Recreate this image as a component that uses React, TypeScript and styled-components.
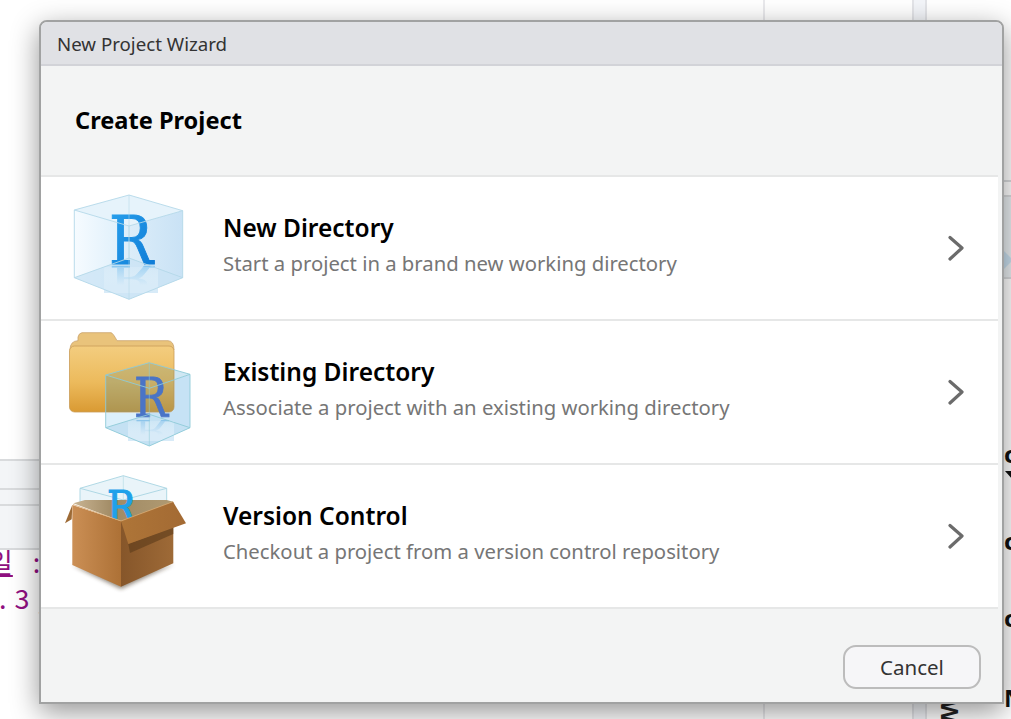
import styled, { createGlobalStyle } from 'styled-components';

const GlobalStyle = createGlobalStyle`
  html, body {
    margin: 0;
    padding: 0;
    background: #ffffff;
    font-family: 'Noto Sans', 'Open Sans', sans-serif;
  }
`;

//background ide
const Page = styled.div`
  position: relative;
  width: 1011px;
  height: 719px;
  overflow: hidden;
  display: flex;
  background: #ffffff;
`;

const SourcePane = styled.div`
  width: 765px;
  height: 100%;
  flex-shrink: 0;
  padding-top: 459px;
  box-sizing: border-box;
  border-right: 2px solid #e9e9ec;
  overflow: hidden;
`;

const PaneBand = styled.div<{ $height: number }>`
  height: ${({ $height }) => $height}px;
  background: #f3f5f7;
  border-top: 2px solid #d9dbdd;
`;

const Outline = styled.div`
  font-family: 'Noto Sans CJK KR', 'Noto Sans', sans-serif;
  font-size: 27px;
  line-height: 24px;
  color: #8f0f80;
  margin-left: -12px;
  white-space: nowrap;
  border-top: 2px solid #d9dbdd;
`;

const OutlineWord = styled.span`
  text-decoration: underline;
  margin-right: 20px;
`;

const OutlineNumbers = styled.span`
  display: block;
  margin: 12px 0 0 11px;
  letter-spacing: 1px;
`;

const MiddlePane = styled.div`
  width: 147px;
  flex-shrink: 0;
`;

const Splitter = styled.div`
  width: 11px;
  height: 100%;
  flex-shrink: 0;
  background: #f3f5f9;
  border-left: 2px solid #e3e4e8;
  border-right: 2px solid #e3e4e8;
`;

const ConsolePane = styled.div`
  flex: 1;
  padding-top: 180px;
  min-width: 0;
`;

const ConsoleTab = styled.div`
  height: 13px;
  border-top: 2px solid #d9dbdd;
`;

const ConsoleBar = styled.div`
  height: 80px;
  display: flex;
  align-items: center;
  padding-left: 76px;
  background: #e9eef1;
  border-top: 2px solid #d9dbdd;
  border-bottom: 2px solid #d9dbdd;
`;

const ConsoleArrow = styled.div`
  width: 0;
  height: 0;
  border-top: 10px solid transparent;
  border-bottom: 10px solid transparent;
  border-left: 10px solid #c9dfee;
  margin-top: 46px;
`;

const ConsoleLines = styled.div`
  padding: 162px 0 0 77px;
  font-family: 'Noto Sans', sans-serif;
  font-size: 24px;
  font-weight: 700;
  line-height: 26px;
  color: #111111;
`;

const ConsoleLine = styled.div<{ $gap: number }>`
  height: ${({ $gap }) => $gap}px;
`;

const PromptMark = styled.div`
  width: 0;
  height: 0;
  margin: 4px 0 0 1px;
  border-left: 7px solid transparent;
  border-right: 7px solid transparent;
  border-top: 8px solid #111111;
`;

const SideWord = styled.div`
  position: absolute;
  left: 940px;
  top: 700px;
  font-family: 'Noto Sans', sans-serif;
  font-size: 24px;
  font-weight: 700;
  line-height: 24px;
  color: #222222;
  transform-origin: 0 0;
  transform: rotate(90deg) translate(0, -22px);
`;

//dialog
const Dialog = styled.div`
  position: absolute;
  left: 39px;
  top: 20px;
  width: 965px;
  height: 684px;
  box-sizing: border-box;
  display: flex;
  flex-direction: column;
  border: 2px solid #a1a2a2;
  border-radius: 8px 8px 0 0;
  background: #f3f4f4;
  box-shadow: 0 8px 28px rgba(0, 0, 0, 0.42);
  overflow: hidden;
`;

const TitleBar = styled.div`
  height: 44px;
  flex-shrink: 0;
  box-sizing: border-box;
  display: flex;
  align-items: center;
  padding-left: 16px;
  background: #e0e1e5;
  border-bottom: 2px solid #d2d3d8;
  font-size: 18.7px;
  color: #333333;
`;

const Header = styled.div`
  height: 109px;
  flex-shrink: 0;
  box-sizing: border-box;
  display: flex;
  align-items: center;
  padding: 0 0 1px 34px;
  font-size: 23.6px;
  font-weight: 700;
  color: #000000;
`;

const OptionList = styled.div`
  margin-right: 4px;
  border-top: 2px solid #e6e7e7;
`;

const OptionRow = styled.div`
  height: 142px;
  display: flex;
  align-items: center;
  padding-left: 29px;
  background: #ffffff;
  border-bottom: 2px solid #e6e7e7;
`;

const OptionIcon = styled.svg`
  width: 130px;
  height: 130px;
  flex-shrink: 0;
  overflow: visible;
  margin: 2px 23px 0 0;
`;

const OptionText = styled.div`
  display: flex;
  flex-direction: column;
  gap: 6px;
  margin-top: -8px;
`;

const OptionTitle = styled.div`
  font-size: 24.5px;
  line-height: 31px;
  font-weight: 600;
  color: #000000;
`;

const OptionDesc = styled.div`
  font-size: 20.3px;
  line-height: 28px;
  color: #767676;
`;

const Chevron = styled.svg`
  width: 18px;
  height: 26px;
  margin-left: auto;
  margin-right: 33px;
  fill: none;
  stroke: #6b6b6b;
  stroke-width: 3.2;
  stroke-linecap: round;
  stroke-linejoin: round;
`;

const Footer = styled.div`
  flex: 1;
  display: flex;
  justify-content: flex-end;
  align-items: flex-start;
  padding: 36px 21px 0 0;
`;

const CancelButton = styled.button`
  width: 138px;
  height: 44px;
  box-sizing: border-box;
  border: 2px solid #bcbcbc;
  border-radius: 13px;
  background: #f6f6f8;
  font-family: inherit;
  font-size: 20.5px;
  color: #333333;
  padding: 0;
`;

const rFont = "'DejaVu Serif', 'Liberation Serif', serif";

function IconDefs() {
  return (
    <defs>
      <linearGradient id="leftFace" x1="0" y1="0" x2="1" y2="0">
        <stop offset="0" stopColor="#f6fbff" />
        <stop offset="1" stopColor="#dbeefa" />
      </linearGradient>
      <linearGradient id="rightFace" x1="0" y1="0" x2="1" y2="0">
        <stop offset="0" stopColor="#dcedf9" />
        <stop offset="1" stopColor="#c9e2f5" />
      </linearGradient>
      <linearGradient id="rLetter" x1="0" y1="0" x2="1" y2="1">
        <stop offset="0" stopColor="#2aa3ee" />
        <stop offset="1" stopColor="#0c78d4" />
      </linearGradient>
      <linearGradient id="reflectFade" x1="0" y1="0" x2="0" y2="1">
        <stop offset="0" stopColor="#e4f2fb" stopOpacity="0.3" />
        <stop offset="0.7" stopColor="#d8ebf8" stopOpacity="1" />
      </linearGradient>
      <linearGradient id="folderBody" x1="0" y1="0" x2="0" y2="1">
        <stop offset="0" stopColor="#f3cd7f" />
        <stop offset="0.55" stopColor="#ecba5c" />
        <stop offset="1" stopColor="#d99a33" />
      </linearGradient>
      <linearGradient id="boxLeft" x1="0" y1="0" x2="1" y2="0">
        <stop offset="0" stopColor="#cb8f55" />
        <stop offset="1" stopColor="#ad7136" />
      </linearGradient>
      <linearGradient id="boxRight" x1="0" y1="0" x2="1" y2="0">
        <stop offset="0" stopColor="#86562a" />
        <stop offset="1" stopColor="#9e6a37" />
      </linearGradient>
      <linearGradient id="boxFlap" x1="0" y1="0" x2="1" y2="0">
        <stop offset="0" stopColor="#ae7538" />
        <stop offset="1" stopColor="#a36a33" />
      </linearGradient>
      <linearGradient id="boxInside" x1="0" y1="0" x2="1" y2="0">
        <stop offset="0" stopColor="#c9b493" />
        <stop offset="0.4" stopColor="#a08a64" />
        <stop offset="1" stopColor="#b09a72" />
      </linearGradient>
      <clipPath id="folderClip">
        <rect x="-0.5" y="18" width="104.5" height="66" rx="5" />
      </clipPath>
      <clipPath id="boxOpening">
        <polygon points="3.3,20 103.3,20 103.3,37.7 51,57 3.3,39.3" />
      </clipPath>
      <filter id="soft" x="-20%" y="-20%" width="140%" height="140%">
        <feGaussianBlur stdDeviation="2" />
      </filter>
    </defs>
  );
}

function NewDirectoryIcon() {
  return (
    <OptionIcon viewBox="0 0 130 130" aria-hidden="true">
      <IconDefs />
      <polygon points="59,11 112.7,26.7 59,42 4.3,26" fill="#e6f3fb" />
      <polygon points="4.3,26 59,42 59,115.3 4.3,93.7" fill="url(#leftFace)" />
      <polygon points="59,42 112.7,26.7 112.7,93.7 59,115.3" fill="url(#rightFace)" />
      <polygon points="4.3,93.7 59,74 112.7,93.7 59,115.3" fill="#c9e3f4" opacity="0.75" />
      <text fontFamily={rFont} fontSize="68" fill="#5fb4ec" opacity="0.6" stroke="#5fb4ec" strokeWidth="1" textLength="44" lengthAdjust="spacingAndGlyphs" transform="translate(39,82) scale(1,-0.5)">R</text>
      <rect x="34" y="83" width="54" height="26" fill="url(#reflectFade)" />
      <text x="39" y="80" fontFamily={rFont} fontSize="68" fill="url(#rLetter)" stroke="url(#rLetter)" strokeWidth="1" textLength="44" lengthAdjust="spacingAndGlyphs">R</text>
      <g fill="none" stroke="#b3d8e9" strokeWidth="0.9">
        <polygon points="59,11 112.7,26.7 112.7,93.7 59,115.3 4.3,93.7 4.3,26" />
        <polyline points="4.3,26 59,42 112.7,26.7" />
        <line x1="59" y1="11" x2="59" y2="74" opacity="0.6" />
        <line x1="59" y1="42" x2="59" y2="115.3" opacity="0.6" />
        <polyline points="4.3,93.7 59,74 112.7,93.7" />
      </g>
    </OptionIcon>
  );
}

function ExistingDirectoryIcon() {
  return (
    <OptionIcon viewBox="0 0 130 130" aria-hidden="true">
      <polygon points="35.7,47 79.3,60.3 79.3,118 35.7,99.7" fill="#dcf0fb" />
      <polygon points="79.3,60.3 120,46.3 120,99.7 79.3,118" fill="#c6e2f5" />
      <polygon points="79.3,34.7 120,46.3 79.3,60.3 35.7,47" fill="#cfe7f3" />
      <polygon points="35.7,99.7 79.3,86.3 120,99.7 79.3,118" fill="#c4e1f3" />
      <path d="M0 22 Q0 13 8 12.7 L8 9 Q9 5 12 4.7 L41 4.7 Q43 5 47 12.7 L98 12.7 Q104 13 104 22 Z" fill="#e9c37b" stroke="#c9a16a" strokeWidth="0.8" />
      <rect x="-0.5" y="18" width="104.5" height="66" rx="5" fill="url(#folderBody)" stroke="#c99c58" strokeWidth="0.8" />
      <g clipPath="url(#folderClip)">
        <polygon points="35.7,47 79.3,60.3 79.3,118 35.7,99.7" fill="#4f8a92" opacity="0.3" />
        <polygon points="79.3,60.3 120,46.3 120,99.7 79.3,118" fill="#4f8a92" opacity="0.22" />
        <polygon points="79.3,34.7 120,46.3 79.3,60.3 35.7,47" fill="#4f8a92" opacity="0.22" />
      </g>
      <text fontFamily={rFont} fontSize="54" fill="#6fb6e6" opacity="0.65" textLength="34" lengthAdjust="spacingAndGlyphs" transform="translate(64,92) scale(1,-0.5)">R</text>
      <rect x="58" y="93" width="46" height="20" fill="url(#reflectFade)" />
      <text x="64" y="88.7" fontFamily={rFont} fontSize="54" fill="#4a74c6" stroke="#4a74c6" strokeWidth="0.8" textLength="34" lengthAdjust="spacingAndGlyphs">R</text>
      <g fill="none" stroke="#8ecbd8" strokeWidth="0.9">
        <polygon points="79.3,34.7 120,46.3 120,99.7 79.3,118 35.7,99.7 35.7,47" />
        <polyline points="35.7,47 79.3,60.3 120,46.3" />
        <line x1="79.3" y1="34.7" x2="79.3" y2="118" opacity="0.6" />
        <polyline points="35.7,99.7 79.3,86.3 120,99.7" />
      </g>
    </OptionIcon>
  );
}

function VersionControlIcon() {
  return (
    <OptionIcon viewBox="0 0 130 130" aria-hidden="true">
      <g transform="translate(0,-8)">
        <polygon points="2,101 51,125 104,100 51,112" fill="#3a2a18" opacity="0.55" filter="url(#soft)" />
        <polygon points="10,24.3 53.3,11.7 96.7,24.3 96.7,40 10,40" fill="#dff0f7" opacity="0.7" />
        <g fill="none" stroke="#a8d5e2" strokeWidth="0.9">
          <polygon points="10,24.3 53.3,11.7 96.7,24.3 96.7,40 10,40" />
          <polyline points="10,24.3 53.3,36 96.7,24.3" />
          <line x1="53.3" y1="11.7" x2="53.3" y2="36" opacity="0.6" />
        </g>
        <polygon points="3.3,39.3 15,36 96.7,36 103.3,37.7 51,57" fill="url(#boxInside)" />
        <text x="37" y="60" fontFamily={rFont} fontSize="46" fill="#1ea1ea" stroke="#1ea1ea" strokeWidth="1.2" textLength="29" lengthAdjust="spacingAndGlyphs" clipPath="url(#boxOpening)">R</text>
        <polygon points="2.3,41 -5,59.3 1.7,55.3 2.3,41" fill="#9d6a35" />
        <polygon points="2.3,41 51,57 51,122.7 2.3,101" fill="url(#boxLeft)" />
        <polygon points="51,57 103.3,37.7 103.3,99.3 51,122.7" fill="url(#boxRight)" />
        <polygon points="58.3,80 103.3,63 103.3,70 60,89" fill="#5f3d1c" opacity="0.65" />
        <polygon points="51,57 103,37.7 116,59.3 58.3,80" fill="url(#boxFlap)" />
        <polyline points="3,40.5 51,57 103,37.7" fill="none" stroke="#d9ab72" strokeWidth="0.8" />
      </g>
    </OptionIcon>
  );
}

function RowChevron() {
  return (
    <Chevron viewBox="0 0 18 26" aria-hidden="true">
      <polyline points="3,2.5 15,13 3,24" />
    </Chevron>
  );
}

const options = [
  { title: 'New Directory', desc: 'Start a project in a brand new working directory', icon: <NewDirectoryIcon /> },
  { title: 'Existing Directory', desc: 'Associate a project with an existing working directory', icon: <ExistingDirectoryIcon /> },
  { title: 'Version Control', desc: 'Checkout a project from a version control repository', icon: <VersionControlIcon /> },
];

function App() {
  return (
    <>
      <GlobalStyle />
      <Page>
        <SourcePane>
          <PaneBand $height={27} />
          <PaneBand $height={14} />
          <PaneBand $height={42} />
          <Outline>
            <OutlineWord>일</OutlineWord>:
            <OutlineNumbers>. 3 ,</OutlineNumbers>
          </Outline>
        </SourcePane>
        <MiddlePane />
        <Splitter />
        <ConsolePane>
          <ConsoleTab />
          <ConsoleBar>
            <ConsoleArrow />
          </ConsoleBar>
          <ConsoleLines>
            <ConsoleLine $gap={87}>
              c
              <PromptMark />
            </ConsoleLine>
            <ConsoleLine $gap={77}>c</ConsoleLine>
            <ConsoleLine $gap={80}>c</ConsoleLine>
            <ConsoleLine $gap={26}>N</ConsoleLine>
          </ConsoleLines>
        </ConsolePane>
        <SideWord>W</SideWord>

        <Dialog>
          <TitleBar>New Project Wizard</TitleBar>
          <Header>Create Project</Header>
          <OptionList>
            {options.map((option) => (
              <OptionRow key={option.title}>
                {option.icon}
                <OptionText>
                  <OptionTitle>{option.title}</OptionTitle>
                  <OptionDesc>{option.desc}</OptionDesc>
                </OptionText>
                <RowChevron />
              </OptionRow>
            ))}
          </OptionList>
          <Footer>
            <CancelButton>Cancel</CancelButton>
          </Footer>
        </Dialog>
      </Page>
    </>
  );
}

export default App;
